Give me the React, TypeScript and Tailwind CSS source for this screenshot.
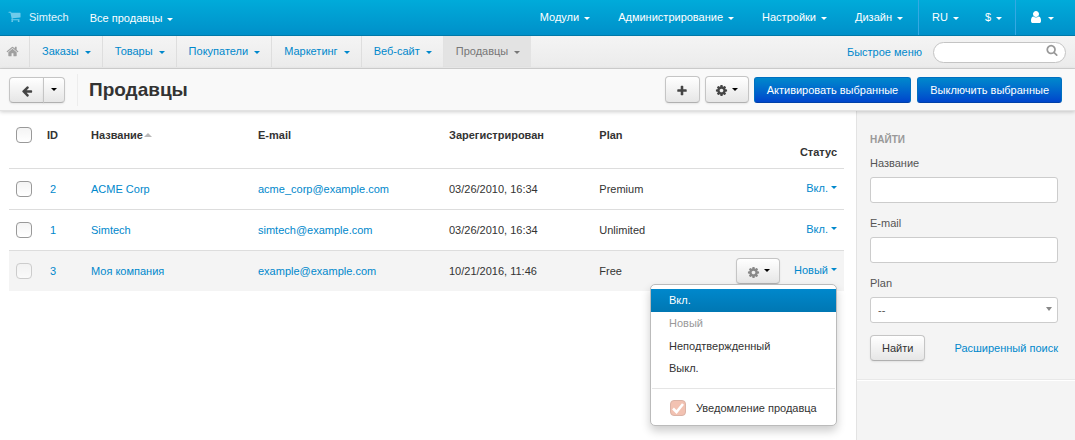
import type { ReactNode } from "react";

const paths = {
  left: "M1664 896v128q0 53-32.5 90.5t-84.5 37.5h-704l293 294q38 36 38 90t-38 90l-75 76q-37 37-90 37-52 0-91-37l-651-652q-37-37-37-90 0-52 37-91l651-650q38-38 91-38 52 0 90 38l75 74q38 38 38 91t-38 91l-293 293h704q52 0 84.5 37.5t32.5 90.5z",
  plus: "M1600 736v192q0 40-28 68t-68 28h-416v416q0 40-28 68t-68 28h-192q-40 0-68-28t-28-68v-416h-416q-40 0-68-28t-28-68v-192q0-40 28-68t68-28h416v-416q0-40 28-68t68-28h192q40 0 68 28t28 68v416h416q40 0 68 28t28 68z",
  cog: "M1152 896q0-106-75-181t-181-75-181 75-75 181 75 181 181 75 181-75 75-181zm512-109v222q0 12-8 23t-20 13l-185 28q-19 54-39 91 35 50 107 138 10 12 10 25t-9 23q-27 37-99 108t-94 71q-12 0-26-9l-138-108q-44 23-91 38-16 136-29 186-7 28-36 28h-222q-14 0-24.5-8.5t-11.5-21.5l-28-184q-49-16-90-37l-141 107q-10 9-25 9-14 0-25-11-126-114-165-168-7-10-7-23 0-12 8-23 15-21 51-66.5t54-70.5q-27-50-41-99l-183-27q-13-2-21-12.5t-8-23.5v-222q0-12 8-23t19-13l186-28q14-46 39-92-40-57-107-138-10-12-10-24 0-10 9-23 26-36 98.5-107.500t94.500-71.500q13 0 26 10l138 107q44-23 91-38 16-136 29-186 7-28 36-28h222q14 0 24.500 8.500t11.500 21.500l28 184q49 16 90 37l142-107q9-9 24-9 13 0 25 10 129 119 165 170 7 8 7 22 0 12-8 23-15 21-51 66.500t-54 70.500q26 50 41 98l183 28q13 2 21 12.500t8 23.500z",
  home: "M1472 992v480q0 26-19 45t-45 19h-384v-384h-256v384h-384q-26 0-45-19t-19-45v-480q0-1 .5-3t.5-3l575-474 575 474q1 2 1 6zm223-69l-62 74q-8 9-21 11h-3q-13 0-21-7l-692-577-692 577q-12 8-24 7-13-2-21-11l-62-74q-8-10-7-23.500t11-21.500l719-599q32-26 76-26t76 26l244 204v-195q0-14 9-23t23-9h192q14 0 23 9t9 23v408l219 182q10 8 11 21.500t-7 23.500z",
  cart: "M704 1536q0 52-38 90t-90 38-90-38-38-90 38-90 90-38 90 38 38 90zm896 0q0 52-38 90t-90 38-90-38-38-90 38-90 90-38 90 38 38 90zm128-1088v512q0 24-16.500 42.500t-40.500 21.500l-1044 122q13 60 13 70 0 16-24 64h920q26 0 45 19t19 45-19 45-45 19h-1024q-26 0-45-19t-19-45q0-11 8-31.500t16-36 21.500-40 15.500-29.500l-177-823h-204q-26 0-45-19t-19-45 19-45 45-19h256q16 0 28.500 6.500t19.500 15.500 13 24.500 8 26 5.500 29.500 4.500 26h1201q26 0 45 19t19 45z",
  search: "M1216 832q0-185-131.500-316.500t-316.500-131.500-316.500 131.500-131.500 316.500 131.500 316.500 316.500 131.500 316.500-131.500 131.500-316.500zm512 832q0 52-38 90t-90 38q-54 0-90-38l-343-342q-179 124-399 124-143 0-273.500-55.500t-225-150-150-225-55.500-273.500 55.500-273.500 150-225 225-150 273.500-55.500 273.500 55.500 225 150 150 225 55.500 273.500q0 220-124 399l343 343q37 37 37 90z",
  user: "M1536 1399q0 109-62.500 187t-150.500 78h-854q-88 0-150.500-78t-62.500-187q0-85 8.500-160.500t31.500-152 58.500-131 94-89 134.500-34.500q131 128 313 128t313-128q76 0 134.500 34.500t94 89 58.500 131 31.500 152 8.500 160.500zm-256-887q0 159-112.500 271.500t-271.500 112.500-271.500-112.500-112.500-271.500 112.500-271.500 271.500-112.500 271.500 112.500 112.500 271.500z",
};

function Icon({ name, className }: { name: keyof typeof paths; className: string }) {
  return (
    <svg viewBox="0 0 1792 1792" fill="currentColor" aria-hidden="true" className={`shrink-0 ${className}`}>
      <path d={paths[name]} />
    </svg>
  );
}

function Caret({ low }: { low?: boolean }) {
  return (
    <span
      className={`inline-block shrink-0 border-x-3 border-t-3 border-x-transparent border-t-current ${low ? "mt-[3px]" : ""}`}
    />
  );
}

function TopLink({ children, divided, wide }: { children: ReactNode; divided?: boolean; wide?: boolean }) {
  return (
    <a
      href="#"
      className={`flex items-center gap-[5px] pb-[2px] pl-[13px] ${wide ? "pr-[15px]" : "pr-[13px]"} ${
        divided ? "border-l border-[#35a9e3]" : ""
      }`}
    >
      {children}
      <Caret low />
    </a>
  );
}

const greyButton =
  "flex items-center justify-center border border-[#c5c5c5] border-b-[#b0b0b0] bg-linear-to-b from-white to-[#e6e6e6] text-[#333] shadow-[0_1px_2px_rgba(0,0,0,0.08)]";
const blueButton =
  "flex h-[26px] items-center rounded-[3px] border border-[#0070c0] border-b-[#0040a8] bg-linear-to-b from-[#0088cc] to-[#0044cc] px-3 text-white";
const checkbox =
  "block size-4 appearance-none rounded-[4px] border border-[#999] bg-linear-to-b from-[#f4f4f4] to-white disabled:border-[#ccc] disabled:from-[#f2f2f2] disabled:to-[#fafafa]";
const field = "h-[26px] w-full rounded-[3px] border border-[#ccc] bg-white px-[7px] text-[#555]";

const tabs = ["Заказы", "Товары", "Покупатели", "Маркетинг", "Веб-сайт", "Продавцы"];

const vendors = [
  { id: 2, name: "ACME Corp", email: "acme_corp@example.com", date: "03/26/2010, 16:34", plan: "Premium", status: "Вкл." },
  { id: 1, name: "Simtech", email: "simtech@example.com", date: "03/26/2010, 16:34", plan: "Unlimited", status: "Вкл." },
  { id: 3, name: "Моя компания", email: "example@example.com", date: "10/21/2016, 11:46", plan: "Free", status: "Новый", open: true },
];

function StatusMenu() {
  return (
    <div className="absolute top-[33px] right-[7px] z-10 w-[187px] rounded-[5px] border border-[#bbb] bg-white pt-1 text-left text-[#333] shadow-[0_5px_10px_rgba(0,0,0,0.2)]">
      <button className="block h-[23px] w-full bg-linear-to-b from-[#0088cc] to-[#0077b3] px-[18px] text-left text-white">
        Вкл.
      </button>
      <button disabled className="block h-[23px] w-full px-[18px] text-left text-[#999]">Новый</button>
      <button className="block h-[22px] w-full px-[18px] text-left">Неподтвержденный</button>
      <button className="block h-[23px] w-full px-[18px] text-left">Выкл.</button>
      <div className="mx-px mt-2 border-t border-[#e5e5e5]" />
      <label className="flex h-9 items-center gap-[10px] pt-[3px] pl-[19px]">
        <span className="relative block size-4">
          <input
            type="checkbox"
            defaultChecked
            disabled
            className="block size-4 appearance-none rounded-[4px] border border-[#dbb3a6] bg-[#f2c2b2]"
          />
          <svg viewBox="0 0 16 16" fill="none" aria-hidden="true" className="pointer-events-none absolute inset-0 size-4">
            <path d="M3 8.500 6.500 12 13 4" stroke="#fff" strokeWidth="2.600" />
          </svg>
        </span>
        Уведомление продавца
      </label>
    </div>
  );
}

export default function App() {
  return (
    <div className="flex min-h-screen flex-col bg-white font-['Liberation_Sans',Arial,sans-serif] text-[11px] leading-4 text-[#333]">
      <header className="flex h-9 justify-between border-b border-[#0079a8] bg-linear-to-b from-[#00abda] to-[#0090c9] text-white">
        <div className="flex items-stretch">
          <a href="#" className="flex items-center gap-2 pb-[2px] pl-2 text-[#e4f5fc]">
            <Icon name="cart" className="size-[13px] text-[#6fcbea]" />
            Simtech
          </a>
          <a href="#" className="ml-[21px] flex items-center gap-[5px]">
            Все продавцы
            <Caret low />
          </a>
        </div>
        <nav className="flex items-stretch pr-2">
          <TopLink wide>Модули</TopLink>
          <TopLink wide>Администрирование</TopLink>
          <TopLink wide>Настройки</TopLink>
          <TopLink wide>Дизайн</TopLink>
          <TopLink divided>RU</TopLink>
          <TopLink>$</TopLink>
          <TopLink divided>
            <Icon name="user" className="size-[14px]" />
          </TopLink>
        </nav>
      </header>

      <div className="flex h-[33px] items-stretch justify-between border-b border-[#d4d4d4] bg-linear-to-b from-[#f4f4f4] to-[#ebebeb] pr-[9px]">
        <nav className="flex items-stretch text-[#0088cc]">
          <a href="#" aria-label="Главная" className="flex items-center pr-[10px] pb-px pl-[6px] text-[#a0a0a0]">
            <Icon name="home" className="size-[13px]" />
          </a>
          {tabs.map((tab) => (
            <a
              key={tab}
              href="#"
              className={`mb-px flex items-center gap-[6px] border-l pr-[11px] pb-px pl-3 ${
                tab === "Продавцы" ? "border-[#e2e2e2] bg-[#e3e3e3] text-[#777]" : "border-[#dedede]"
              }`}
            >
              {tab}
              <Caret low />
            </a>
          ))}
        </nav>
        <div className="flex items-center gap-[11px] text-[#0088cc]">
          <a href="#">Быстрое меню</a>
          <div className="relative">
            <input
              type="text"
              aria-label="Поиск"
              className="block h-[21px] w-[133px] rounded-full border border-[#c4c4c4] bg-white pr-6 pl-3 text-[#555]"
            />
            <Icon name="search" className="absolute top-[2px] right-2 size-3 text-[#999]" />
          </div>
        </div>
      </div>

      <div className="relative z-10 flex h-[42px] items-center justify-between border-b border-[#e2e2e2] bg-[#f9f9f9] pr-[13px] pl-[9px] shadow-[0_1px_4px_rgba(0,0,0,0.2)]">
        <div className="flex items-center">
          <button aria-label="Назад" className={`${greyButton} h-[26px] w-[35px] rounded-l-[4px] pt-[2px]`}>
            <Icon name="left" className="size-3 text-[#444]" />
          </button>
          <button aria-label="История" className={`${greyButton} -ml-px h-[26px] w-[22px] rounded-r-[4px] text-black`}>
            <Caret />
          </button>
          <h1 className="ml-3 border-l border-[#ededed] pl-[11px] text-[19px] leading-8 font-bold">Продавцы</h1>
        </div>
        <div className="flex items-center gap-[6px]">
          <button aria-label="Добавить" className={`${greyButton} -mr-px h-[27px] w-[35px] rounded-[4px] pt-[2px]`}>
            <Icon name="plus" className="size-3 text-[#444]" />
          </button>
          <button aria-label="Действия" className={`${greyButton} -mr-px h-[27px] w-11 gap-1 rounded-[4px] text-black`}>
            <Icon name="cog" className="mt-[2px] size-[13px] text-[#444]" />
            <Caret />
          </button>
          <button className={blueButton}>Активировать выбранные</button>
          <button className={blueButton}>Выключить выбранные</button>
        </div>
      </div>

      <div className="flex grow">
        <main className="grow pt-px pr-3 pl-[9px]">
          <table className="w-full table-fixed border-collapse text-left">
            <thead>
              <tr className="h-14 align-top [&>th]:pt-[15px]">
                <th className="w-[38px] pl-[7px]">
                  <input type="checkbox" aria-label="Выбрать всех" className={checkbox} />
                </th>
                <th className="w-11">ID</th>
                <th className="w-[20%]">
                  <span className="flex items-center gap-px">
                    Название
                    <span className="border-x-4 border-b-4 border-x-transparent border-b-[#b8b8b8]" />
                  </span>
                </th>
                <th className="w-[191px]">E-mail</th>
                <th className="w-[18%]">Зарегистрирован</th>
                <th>Plan</th>
                <th className="w-[115px] pr-[7px] pb-2 text-right align-bottom">Статус</th>
              </tr>
            </thead>
            <tbody>
              {vendors.map((v) => (
                <tr key={v.id} className={`h-[41px] border-t border-[#ddd] ${v.open ? "bg-[#f4f4f4]" : ""}`}>
                  <td className="pl-[7px]">
                    <input type="checkbox" aria-label={v.name} disabled={v.open} className={checkbox} />
                  </td>
                  <td className="pl-[3px] text-[#0088cc]"><a href="#">{v.id}</a></td>
                  <td className="text-[#0088cc]"><a href="#">{v.name}</a></td>
                  <td className="text-[#0088cc]"><a href="#">{v.email}</a></td>
                  <td>{v.date}</td>
                  <td>{v.plan}</td>
                  <td className="relative pr-[7px]">
                    <div className="flex items-center justify-end gap-[14px]">
                      {v.open && (
                        <button aria-label="Действия" className={`${greyButton} h-[26px] w-11 shrink-0 gap-1 rounded-[4px] text-black`}>
                          <Icon name="cog" className="mt-[3px] size-[13px] text-[#888]" />
                          <Caret />
                        </button>
                      )}
                      <button className="flex items-center gap-[3px] pb-[2px] text-[#0088cc]">
                        {v.status}
                        <Caret />
                      </button>
                    </div>
                    {v.open && <StatusMenu />}
                  </td>
                </tr>
              ))}
            </tbody>
          </table>
        </main>

        <aside className="w-[219px] shrink-0 border-l border-[#e3e3e3] bg-[#f4f4f4]">
          <form className="border-b border-[#e8e8e8] pt-[21px] pr-[17px] pb-[18px] pl-[13px] text-[#555] shadow-[0_1px_0_#fff]">
            <h2 className="text-[10px] font-bold text-[#999]">НАЙТИ</h2>
            <label className="mt-[7px] block">
              Название
              <input type="text" className={`mt-[6px] block ${field}`} />
            </label>
            <label className="mt-3 block">
              E-mail
              <input type="text" className={`mt-[6px] block ${field}`} />
            </label>
            <label className="mt-3 block">
              Plan
              <span className="relative mt-[6px] block">
                <select className={`block appearance-none ${field}`}>
                  <option>--</option>
                </select>
                <span className="pointer-events-none absolute top-[10px] right-[6px] border-x-3 border-t-4 border-x-transparent border-t-[#888]" />
              </span>
            </label>
            <div className="mt-3 flex items-center justify-between">
              <button type="button" className={`${greyButton} h-[26px] rounded-[4px] px-[11px]`}>Найти</button>
              <a href="#" className="text-[#0088cc]">Расширенный поиск</a>
            </div>
          </form>
        </aside>
      </div>
    </div>
  );
}
